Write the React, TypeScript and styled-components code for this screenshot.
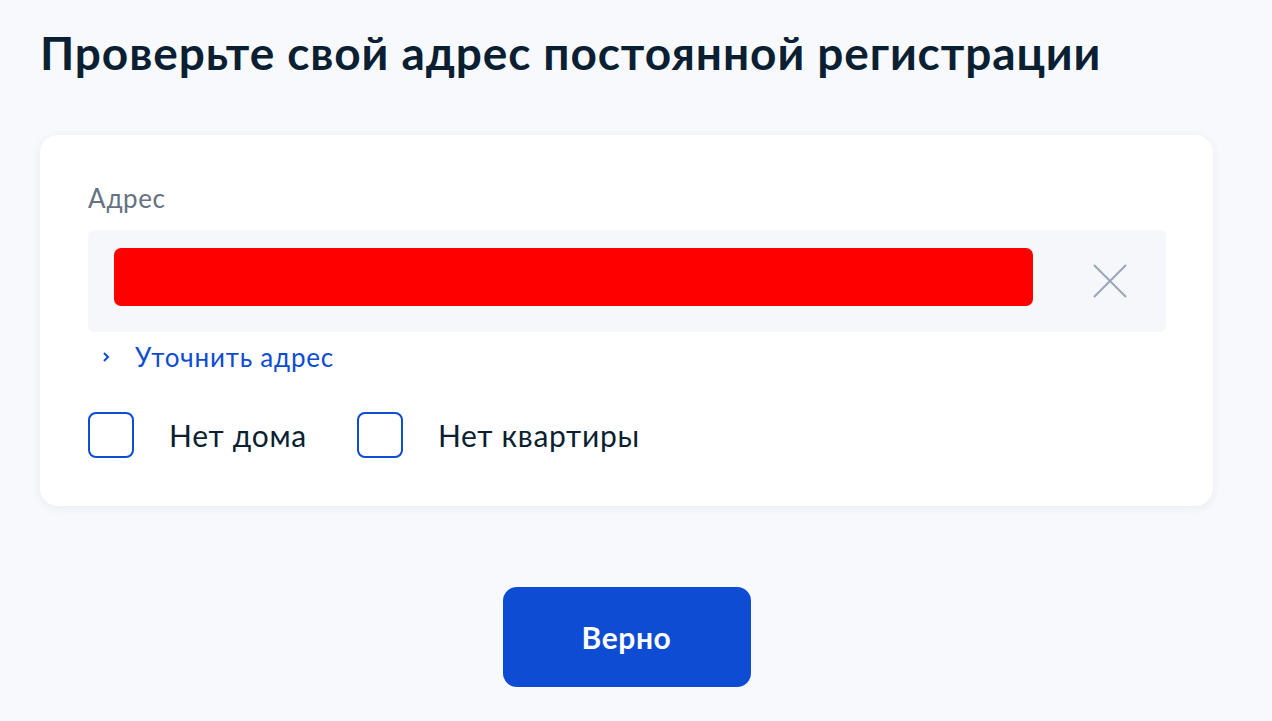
import React from "react";
import styled, { createGlobalStyle } from "styled-components";

const Global = createGlobalStyle`
  html, body { margin: 0; padding: 0; background: #f8f9fc; }
  body { font-family: Lato, "Noto Sans", sans-serif; color: #0b1f33; }
`;

const Page = styled.div`
  width: 1272px;
  height: 721px;
  box-sizing: border-box;
  padding: 23px 59px 0 40px;
  display: flex;
  flex-direction: column;
`;

const Title = styled.h1`
  margin: 0;
  font-size: 46px;
  line-height: 60px;
  font-weight: 700;
  color: #0b1f33;
  letter-spacing: 0.9px;
`;

const Card = styled.div`
  margin-top: 52px;
  background: #fff;
  border-radius: 18px;
  box-shadow: 0 2px 10px rgba(40, 60, 110, 0.07);
  padding: 48px 47px 48px 48px;
  display: flex;
  flex-direction: column;
`;

const Label = styled.div`
  font-size: 26px;
  line-height: 30px;
  letter-spacing: 0.6px;
  color: #66727f;
  margin-bottom: 17px;
`;

const Field = styled.div`
  height: 102px;
  background: #f5f7fa;
  border-radius: 6px;
  display: flex;
  align-items: center;
  padding: 0 39px 0 26px;
  gap: 60px;
`;

const Hidden = styled.div`
  flex: 1;
  height: 58px;
  margin-bottom: 8px;
  background: #ff0000;
  border-radius: 7px;
`;

const ClearIcon = styled.svg`
  width: 34px;
  height: 34px;
  flex: none;
`;

const Link = styled.div`
  display: flex;
  align-items: center;
  gap: 24px;
  margin-top: 10px;
  padding-left: 13px;
  color: #0d4cd3;
  font-size: 26px;
  line-height: 30px;
  letter-spacing: 0.8px;
`;

const Chevron = styled.svg`
  width: 10px;
  height: 12px;
`;

const Checks = styled.div`
  display: flex;
  align-items: center;
  gap: 50px;
  margin-top: 40px;
`;

const CheckItem = styled.label`
  display: flex;
  align-items: center;
  gap: 35px;
  font-size: 30px;
  letter-spacing: 0.7px;
  color: #0b1f33;
`;

const Box = styled.span`
  width: 46px;
  height: 46px;
  box-sizing: border-box;
  border: 2px solid #0d4cd3;
  border-radius: 8px;
  flex: none;
`;

const ButtonRow = styled.div`
  display: flex;
  justify-content: center;
  margin-top: 81px;
`;

const Button = styled.button`
  width: 248px;
  height: 100px;
  border: none;
  border-radius: 14px;
  background: #0d4cd3;
  color: #fff;
  font-family: Lato, "Noto Sans", sans-serif;
  font-size: 30px;
  letter-spacing: 0.6px;
  font-weight: 700;
`;

export default function App() {
  return (
    <>
      <Global />
      <Page>
        <Title>Проверьте свой адрес постоянной регистрации</Title>
        <Card>
          <Label>Адрес</Label>
          <Field>
            <Hidden />
            <ClearIcon viewBox="0 0 34 34">
              <path d="M1 1 L33 33 M33 1 L1 33" stroke="#9aa6bb" strokeWidth="2" fill="none" />
            </ClearIcon>
          </Field>
          <Link>
            <Chevron viewBox="0 0 10 12">
              <path d="M3 2 L7 6 L3 10" stroke="#0d4cd3" strokeWidth="2" fill="none" />
            </Chevron>
            Уточнить адрес
          </Link>
          <Checks>
            <CheckItem>
              <Box />
              Нет дома
            </CheckItem>
            <CheckItem>
              <Box />
              Нет квартиры
            </CheckItem>
          </Checks>
        </Card>
        <ButtonRow>
          <Button>Верно</Button>
        </ButtonRow>
      </Page>
    </>
  );
}
